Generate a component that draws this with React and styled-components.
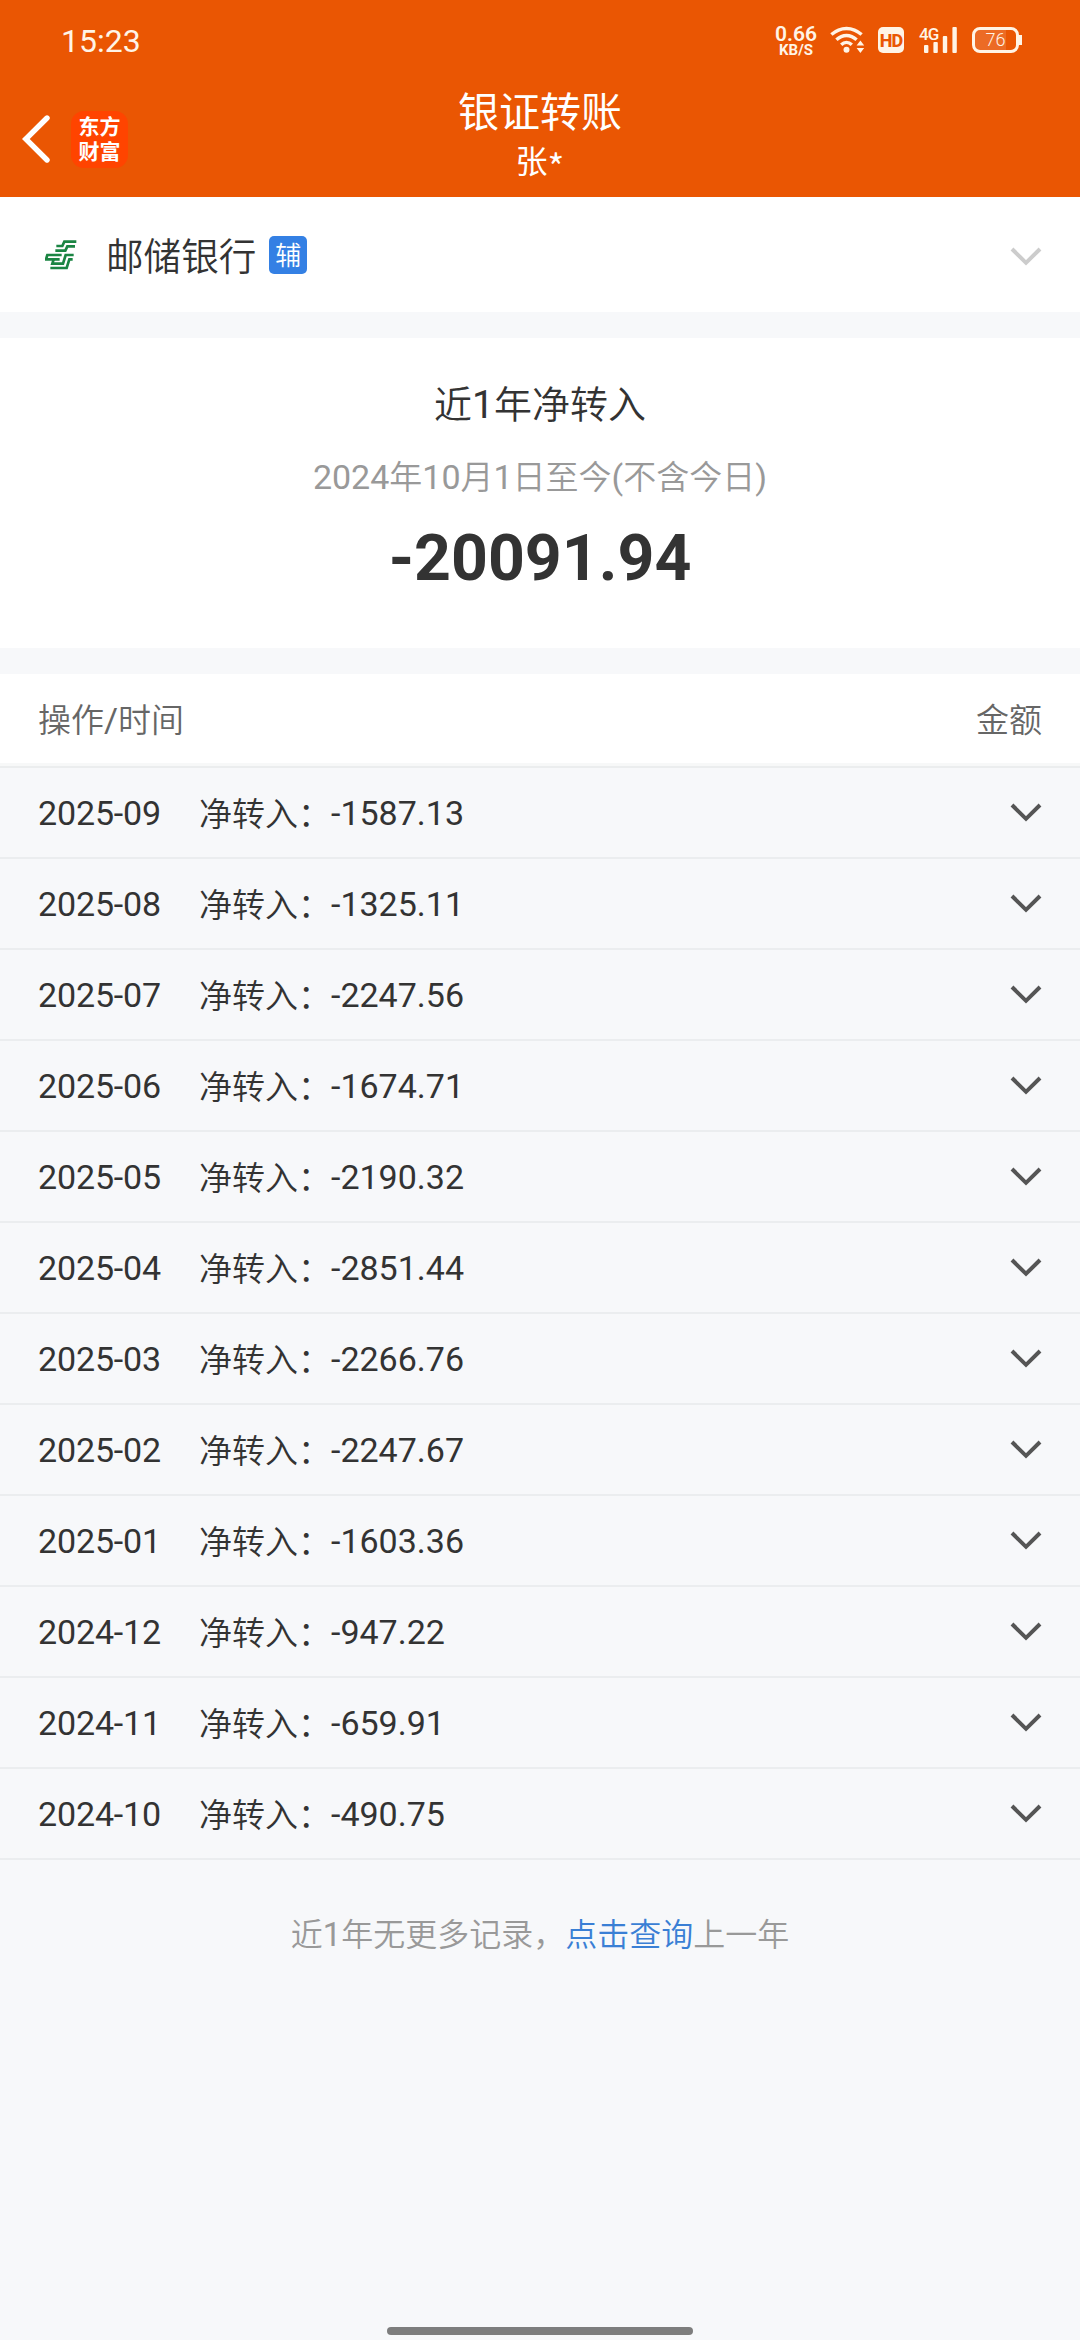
import React from "react";
import styled, { createGlobalStyle } from "styled-components";

const records = [
  { month: "2025-09", amount: "-1587.13" },
  { month: "2025-08", amount: "-1325.11" },
  { month: "2025-07", amount: "-2247.56" },
  { month: "2025-06", amount: "-1674.71" },
  { month: "2025-05", amount: "-2190.32" },
  { month: "2025-04", amount: "-2851.44" },
  { month: "2025-03", amount: "-2266.76" },
  { month: "2025-02", amount: "-2247.67" },
  { month: "2025-01", amount: "-1603.36" },
  { month: "2024-12", amount: "-947.22" },
  { month: "2024-11", amount: "-659.91" },
  { month: "2024-10", amount: "-490.75" },
];

const WifiIcon = () => (
  <svg width="36" height="28" viewBox="0 0 36 28" fill="none">
    <g stroke="#fff4e6" strokeWidth="3.4">
      <path d="M1.4 8.6C10.5 0.4 22.5 0.4 31.6 8.6" />
      <path d="M6.4 13.8C12.6 8 20.4 8 26.6 13.8" />
      <path d="M11.2 18.8C14.4 15.8 18.6 15.8 21.8 18.8" />
    </g>
    <circle cx="16.5" cy="23.8" r="3" fill="#fff4e6" />
    <path
      d="M26.6 19.4L30.4 14.4L34.2 19.4ZM26.6 22L30.4 27L34.2 22Z"
      fill="#fff4e6"
    />
  </svg>
);

const SignalIcon = () => (
  <svg width="34" height="26" viewBox="0 0 34 26" fill="#fff4e6">
    <rect x="0" y="18" width="4.4" height="8" rx="1" />
    <rect x="9.4" y="15" width="4.4" height="11" rx="1" />
    <rect x="18.8" y="9" width="4.4" height="17" rx="1" />
    <rect x="28.4" y="0" width="4.4" height="26" rx="1" />
  </svg>
);

const BackIcon = () => (
  <svg width="28" height="48" viewBox="0 0 28 48" fill="none">
    <path
      d="M25 3L3.8 24L25 45"
      stroke="#fff"
      strokeWidth="5.4"
      strokeLinecap="round"
    />
  </svg>
);

const ChevronIcon = ({ color }) => (
  <svg width="32" height="20" viewBox="0 0 32 20" fill="none">
    <path d="M2 2L16 15.8L30 2" stroke={color} strokeWidth="4" />
  </svg>
);

const PostBankLogo = () => (
  <svg width="32" height="30" viewBox="0 0 96 90" fill="none">
    <g stroke="#1b8543" strokeWidth="8">
      <path d="M94 5H58L52 18H34" />
      <path d="M90 19H67L61 32H31" />
      <path d="M50 45H7L3 58H44" />
      <path d="M86 45H62L54 71H22L26 58" />
      <path d="M83 58H73L65 84H16" />
    </g>
  </svg>
);

const App = () => {
  return (
    <>
      <GlobalStyle />
      <Page>
        <Header>
          <StatusBar>
            <Clock>15:23</Clock>
            <Speed>
              <b>0.66</b>
              <small>KB/S</small>
            </Speed>
            <WifiIcon />
            <HdBadge>HD</HdBadge>
            <Signal>
              <Network>4G</Network>
              <SignalIcon />
            </Signal>
            <Battery>76</Battery>
          </StatusBar>
          <NavBar>
            <NavLeft>
              <BackIcon />
              <AppLogo>
                <span>东方</span>
                <span>财富</span>
              </AppLogo>
            </NavLeft>
            <NavTitle>
              <h1>银证转账</h1>
              <p>
                张<Star>*</Star>
              </p>
            </NavTitle>
          </NavBar>
        </Header>

        <BankRow>
          <PostBankLogo />
          <BankName>邮储银行</BankName>
          <Tag>辅</Tag>
          <ChevronIcon color="#cccccc" />
        </BankRow>

        <Summary>
          <h2>
            近<Num>1</Num>年净转入
          </h2>
          <p>
            <Num>2024</Num>年<Num>10</Num>月<Num>1</Num>日至今<Num>(</Num>
            不含今日<Num>)</Num>
          </p>
          <strong>-20091.94</strong>
        </Summary>

        <TableHead>
          <span>
            操作<Num>/</Num>时间
          </span>
          <span>金额</span>
        </TableHead>
        {records.map(({ month, amount }) => (
          <Record key={month}>
            <Month>{month}</Month>
            <Label>净转入：</Label>
            <Amount>{amount}</Amount>
            <ChevronIcon color="#555555" />
          </Record>
        ))}

        <Footer>
          近<Num>1</Num>年无更多记录，<a>点击查询</a>上一年
        </Footer>
        <HomeBar />
      </Page>
    </>
  );
};

const GlobalStyle = createGlobalStyle`
  * {
    margin: 0;
    padding: 0;
    box-sizing: border-box;
  }
  body {
    background: #f7f8fa;
    font-family: "Noto Sans CJK SC", sans-serif;
    font-weight: 350;
    color: #333;
  }
  svg {
    display: block;
    flex-shrink: 0;
  }
`;

const Page = styled.div`
  width: 1080px;
  height: 2340px;
  display: flex;
  flex-direction: column;
  overflow: hidden;
  background: #f7f8fa;
`;

/* digits are a touch larger than the hanzi beside them */
const Num = styled.span`
  font-family: Roboto, sans-serif;
  font-size: 1.03em;
  font-weight: 400;
  line-height: 1;
`;

const Header = styled.header`
  height: 197px;
  background: #ea5603;
  color: #fff;
`;

const StatusBar = styled.div`
  height: 80px;
  padding: 0 58px 0 61px;
  display: flex;
  align-items: center;
  color: #fff4e6;
  font-family: Roboto, sans-serif;
`;

const Clock = styled.span`
  margin-right: auto;
  padding-top: 1px;
  font-size: 32px;
  font-weight: 400;
`;

const Speed = styled.div`
  width: 46px;
  margin-right: 11px;
  padding-top: 2px;
  display: flex;
  flex-direction: column;
  align-items: center;
  b {
    font-size: 21px;
    font-weight: 600;
    line-height: 18px;
  }
  small {
    font-size: 15px;
    font-weight: 700;
    line-height: 14px;
  }
`;

const HdBadge = styled.span`
  width: 26px;
  height: 26px;
  margin-left: 12px;
  border-radius: 5px;
  background: #fff4e6;
  color: #ea5603;
  font-size: 18px;
  font-weight: 800;
  line-height: 27px;
  text-align: center;
  letter-spacing: -1px;
`;

const Signal = styled.div`
  position: relative;
  margin-left: 20px;
`;

const Network = styled.span`
  position: absolute;
  left: -5px;
  top: 0;
  font-size: 17px;
  font-weight: 500;
  line-height: 14px;
  letter-spacing: -1px;
`;

const Battery = styled.span`
  position: relative;
  width: 47px;
  height: 26px;
  margin: 0 3px 0 14px;
  border: 3px solid #fff4e6;
  border-radius: 8px;
  background: linear-gradient(90deg, #ec6b25 76%, transparent 76%);
  font-size: 18px;
  line-height: 20px;
  text-align: center;
  &::after {
    content: "";
    position: absolute;
    right: -6px;
    top: 5px;
    width: 3px;
    height: 10px;
    background: #fff4e6;
  }
`;

const NavBar = styled.div`
  height: 117px;
  display: grid;
  grid-template-columns: 1fr auto 1fr;
`;

const NavLeft = styled.div`
  height: 117px;
  padding: 1px 0 0 22px;
  display: flex;
  align-items: center;
  gap: 21px;
`;

const AppLogo = styled.div`
  width: 57px;
  height: 57px;
  padding-bottom: 2px;
  border-radius: 13px;
  background: #ff4400;
  display: flex;
  flex-direction: column;
  align-items: center;
  justify-content: center;
  font-size: 21px;
  font-weight: 700;
  line-height: 25px;
`;

const NavTitle = styled.div`
  padding-top: 3px;
  text-align: center;
  h1 {
    font-size: 41px;
    font-weight: 400;
    line-height: 52px;
  }
  p {
    font-size: 32px;
    font-weight: 400;
    line-height: 48px;
  }
`;

/* the glyph sits high in its line, this drops it to the middle */
const Star = styled.span`
  font-size: 36px;
  line-height: 1;
  vertical-align: -8px;
`;

const BankRow = styled.div`
  height: 115px;
  padding: 0 38px 0 45px;
  display: flex;
  align-items: center;
  background: #fff;
  & > :last-child {
    margin: 4px 0 0 auto;
  }
`;

const BankName = styled.span`
  margin-left: 29px;
  padding-bottom: 3px;
  font-size: 37.6px;
`;

const Tag = styled.span`
  width: 38px;
  height: 38px;
  margin-left: 13px;
  border-radius: 5px;
  background: #3480e4;
  color: #fff;
  font-size: 26px;
  line-height: 36px;
  text-align: center;
`;

const Summary = styled.section`
  height: 310px;
  margin: 26px 0;
  padding-top: 36px;
  background: #fff;
  text-align: center;
  h2 {
    font-size: 38px;
    font-weight: 350;
    line-height: 56px;
  }
  p {
    margin-top: 22px;
    font-size: 33px;
    line-height: 46px;
    color: #999;
  }
  strong {
    display: block;
    margin-top: 22px;
    font-family: Roboto, sans-serif;
    font-size: 64.4px;
    font-weight: 700;
    line-height: 76px;
  }
`;

const TableHead = styled.div`
  height: 94px;
  padding: 0 38px;
  display: flex;
  justify-content: space-between;
  background: #fff;
  border-bottom: 2px solid #ebedee;
  box-shadow: inset 0 -3px #f7f8f8;
  font-size: 33px;
  line-height: 89px;
  color: #666;
`;

const Record = styled.div`
  height: 91px;
  padding: 0 38px;
  display: flex;
  align-items: center;
  border-bottom: 2px solid #ebedef;
`;

const Month = styled.span`
  width: 161px;
  font-family: Roboto, sans-serif;
  font-size: 34px;
  font-weight: 400;
  letter-spacing: -0.15px;
`;

const Label = styled.span`
  padding-bottom: 2px;
  font-size: 33px;
`;

const Amount = styled(Month)`
  width: auto;
  margin-right: auto;
  letter-spacing: 0;
`;

const Footer = styled.p`
  margin-top: 48px;
  font-size: 32px;
  line-height: 48px;
  text-align: center;
  color: #999;
  a {
    color: #3a7fd5;
  }
`;

const HomeBar = styled.div`
  width: 306px;
  height: 8px;
  margin: auto auto 5px;
  border-radius: 4px;
  background: #7d7d7d;
`;

export default App;
